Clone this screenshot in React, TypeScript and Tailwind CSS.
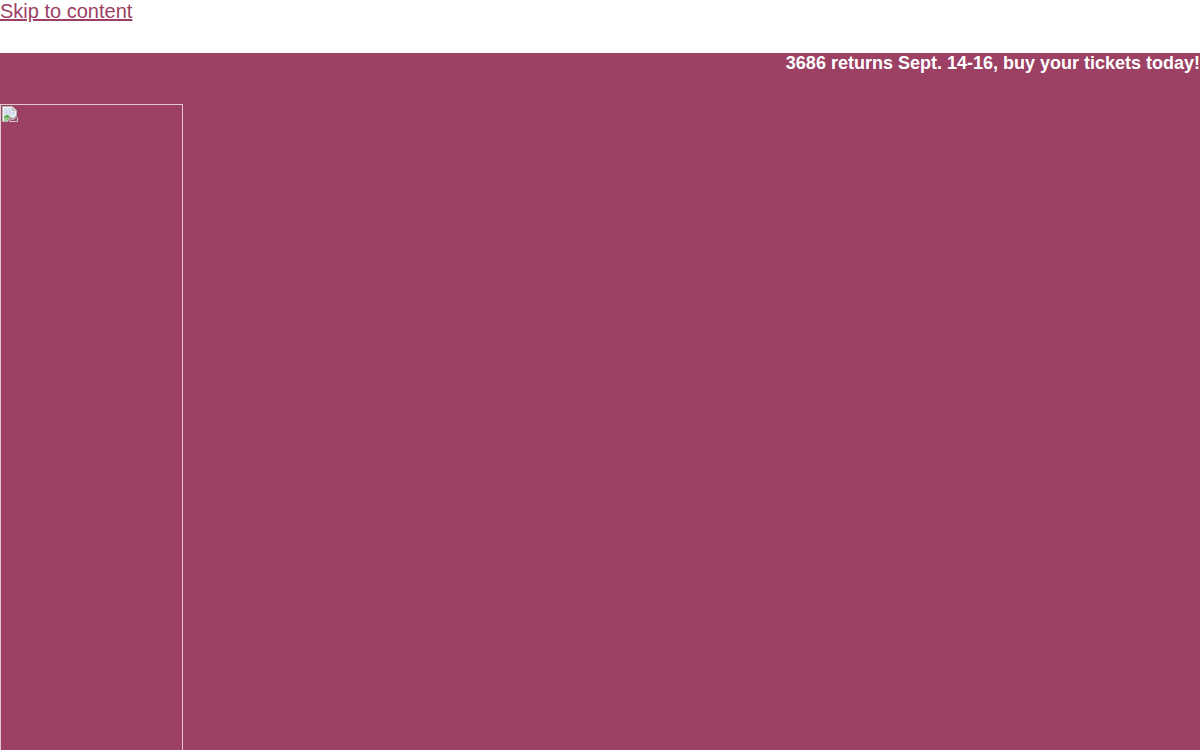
import React from 'react';

// broken image glyph, same as the browser draws for a missing picture
function BrokenImageIcon() {
  return (
    <svg width="16" height="16" viewBox="0 0 16 16" className="block">
      <path d="M0.5 0.5H10.5L14.5 4.5V9.5L11 12.5L8.5 11L5.5 15.5H0.5Z" fill="#f4f4f4" stroke="#b4b4b4" />
      <path d="M10.5 0.5V4.5H14.5" fill="#dedede" stroke="#b4b4b4" />
      <path d="M2 2H9.5V5.5H13V8.5L8 10L5 8L2 10Z" fill="#d5dcec" />
      <path d="M2 14.5V10.5L5 8.5L8 10.5L5 14.5Z" fill="#5aa84e" />
      <path d="M2 14.5V12.5L4 11L6 12L4.5 14.5Z" fill="#9acb85" />
      <path d="M15.5 11.5V15.5H7.5L9 12.5L11 14L15 10.5" fill="none" stroke="#c8c8c8" />
    </svg>
  );
}

export default function App() {
  return (
    <div className="h-[750px] overflow-hidden bg-white font-['Liberation_Sans',Arial,sans-serif]">
      <div className="h-[53px]">
        <a href="#content" className="text-[20px] leading-[23px] text-[#9c4064] underline">
          Skip to content
        </a>
      </div>

      <div className="h-[697px] bg-[#9c4064]">
        <p className="h-[51px] text-right text-[18px] leading-[20px] font-bold text-white">
          3686 returns Sept. 14-16, buy your tickets today!
        </p>
        <div className="h-[660px] w-[183px] border border-[#e3c6d1] p-px">
          <BrokenImageIcon />
        </div>
      </div>
    </div>
  );
}
